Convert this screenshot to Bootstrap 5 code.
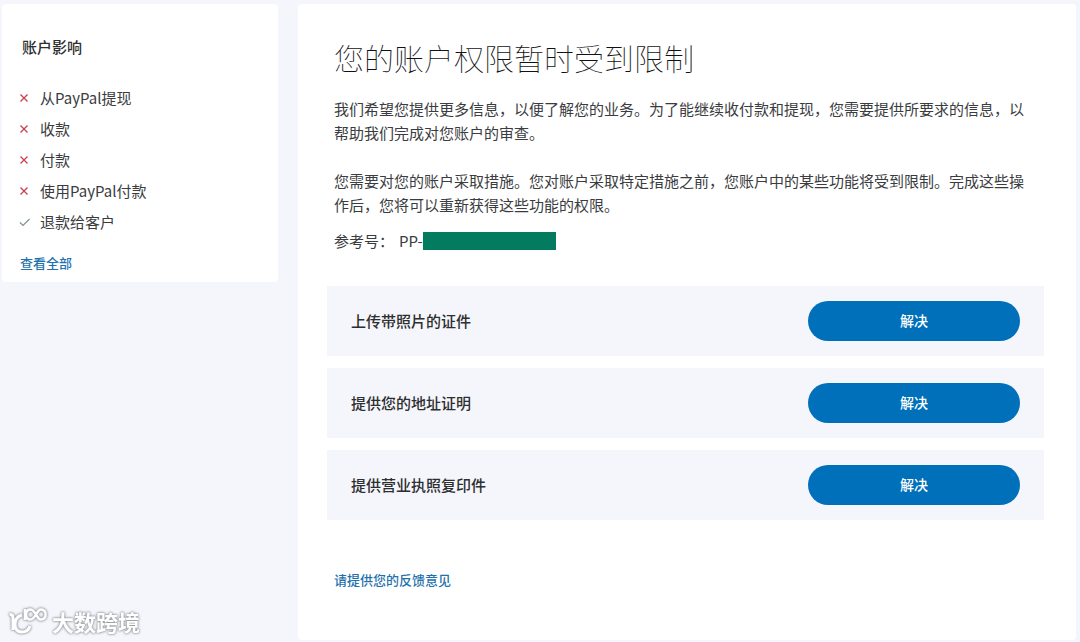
<!DOCTYPE html>
<html lang="zh-CN">
<head>
<meta charset="utf-8">
<meta name="viewport" content="width=device-width, initial-scale=1">
<title>您的账户权限暂时受到限制</title>
<link href="https://cdn.jsdelivr.net/npm/bootstrap@5.3.0/dist/css/bootstrap.min.css" rel="stylesheet">
<style>
  body {
    background: #f5f6fc;
    color: #3a3c40;
    font-family: "Noto Sans CJK SC", "Noto Sans", sans-serif;
    font-size: 15px;
    line-height: 24px;
  }
  .page { gap: 20px; padding: 4px 4px 2px 2px; }
  .panel { background: #fff; border-radius: 4px; }
  .impact { flex: 0 0 276px; padding: 31px 16px 7px; }
  .impact h2 { font-size: 15px; line-height: 24px; font-weight: 500; padding-left: 4px; margin-bottom: 23px; color: #2c2e2f; }
  .impact li { display: flex; align-items: center; gap: 10px; line-height: 31px; }
  .impact svg { width: 12px; height: 12px; fill: none; stroke: #c9404f; stroke-width: 1.3; }
  .impact svg.allowed { stroke: #7f9489; stroke-width: 1.2; }
  .text-link { color: #1f72ae; font-size: 13px; font-weight: 500; text-decoration: none; }
  .text-link:hover { text-decoration: underline; }
  .see-all { margin: 14px 0 0 2px; }
  .content { min-width: 0; padding: 31px 32px 48px 29px; }
  .copy { padding: 0 7px; }
  .copy h1 { font-size: 30px; line-height: 44px; font-weight: 100; margin-bottom: 18px; color: #111214; }
  .copy .intro { margin-bottom: 24px; }
  .copy .limits { margin-bottom: 12px; }
  .reference-no { gap: 5px; }
  .redacted { width: 133px; height: 18px; background: #027b5f; }
  .tasks { gap: 12px; margin: 33px 0 47px; }
  .task { background: #f5f6fb; padding: 15px 24px; }
  .task h3 { font-size: 15px; line-height: 24px; font-weight: 500; color: #2c2e2f; }
  .btn-resolve {
    --bs-btn-color: #fff;
    --bs-btn-bg: #0070ba;
    --bs-btn-hover-color: #fff;
    --bs-btn-hover-bg: #005ea6;
    --bs-btn-font-size: 14px;
    --bs-btn-font-weight: 500;
    --bs-btn-padding-y: 0;
    --bs-btn-line-height: 20px;
    width: 212px;
    height: 40px;
    padding-bottom: 2px;
  }
  .watermark {
    left: 8px; bottom: 5px; gap: 4px;
    color: #fff; font-size: 22px; line-height: 32px; font-weight: 700;
    filter: drop-shadow(0 0 1px #8e8e96) drop-shadow(0 0 1px #b4b4bc);
  }
  .watermark svg { width: 40px; height: 30px; fill: none; stroke: #fff; stroke-width: 3; }
</style>
</head>
<body>
<div class="page d-flex align-items-start min-vh-100">
  <aside class="panel impact">
    <h2>账户影响</h2>
    <ul class="list-unstyled mb-0">
      <li><svg viewBox="0 0 12 12" aria-hidden="true"><path d="M2.500 2.500l7 7M9.500 2.500l-7 7"/></svg>从PayPal提现</li>
      <li><svg viewBox="0 0 12 12" aria-hidden="true"><path d="M2.500 2.500l7 7M9.500 2.500l-7 7"/></svg>收款</li>
      <li><svg viewBox="0 0 12 12" aria-hidden="true"><path d="M2.500 2.500l7 7M9.500 2.500l-7 7"/></svg>付款</li>
      <li><svg viewBox="0 0 12 12" aria-hidden="true"><path d="M2.500 2.500l7 7M9.500 2.500l-7 7"/></svg>使用PayPal付款</li>
      <li><svg class="allowed" viewBox="0 0 12 12" aria-hidden="true"><path d="M2 6.500l3 3L11.500 3"/></svg>退款给客户</li>
    </ul>
    <a class="text-link see-all d-inline-block" href="#">查看全部</a>
  </aside>

  <main class="panel content flex-grow-1 align-self-stretch">
    <div class="copy">
      <h1>您的账户权限暂时受到限制</h1>
      <p class="intro">我们希望您提供更多信息，以便了解您的业务。为了能继续收付款和提现，您需要提供所要求的信息，以帮助我们完成对您账户的审查。</p>
      <p class="limits">您需要对您的账户采取措施。您对账户采取特定措施之前，您账户中的某些功能将受到限制。完成这些操作后，您将可以重新获得这些功能的权限。</p>
      <div class="reference-no d-flex align-items-center"><span>参考号：</span><span class="d-flex align-items-center">PP-<span class="redacted"></span></span></div>
    </div>

    <div class="tasks d-flex flex-column">
      <section class="task d-flex align-items-center justify-content-between">
        <h3 class="mb-0">上传带照片的证件</h3>
        <button type="button" class="btn btn-resolve rounded-pill border-0">解决</button>
      </section>
      <section class="task d-flex align-items-center justify-content-between">
        <h3 class="mb-0">提供您的地址证明</h3>
        <button type="button" class="btn btn-resolve rounded-pill border-0">解决</button>
      </section>
      <section class="task d-flex align-items-center justify-content-between">
        <h3 class="mb-0">提供营业执照复印件</h3>
        <button type="button" class="btn btn-resolve rounded-pill border-0">解决</button>
      </section>
    </div>

    <div class="copy"><a class="text-link" href="#">请提供您的反馈意见</a></div>
  </main>
</div>

<div class="watermark position-fixed d-flex align-items-center">
  <svg viewBox="0 0 40 30" aria-hidden="true">
    <path d="M1.500 8.500Q5 8 5 12V24M14 9Q7 11 7 18Q7 26 14 26Q20 26 22 20"/>
    <path d="M17 3V14M28 8.500C26 5 24 3 21.500 3.500C17 4.500 17 12.500 21.500 13.500C24 14 26 12 28 8.500C30 5 31 3 33.500 3.500C39 4.500 39 12.500 33.500 13.500C31 14 30 12 28 8.500" stroke-width="2.500"/>
  </svg>
  <span>大数跨境</span>
</div>
<script src="https://cdn.jsdelivr.net/npm/bootstrap@5.3.0/dist/js/bootstrap.bundle.min.js"></script>
</body>
</html>
